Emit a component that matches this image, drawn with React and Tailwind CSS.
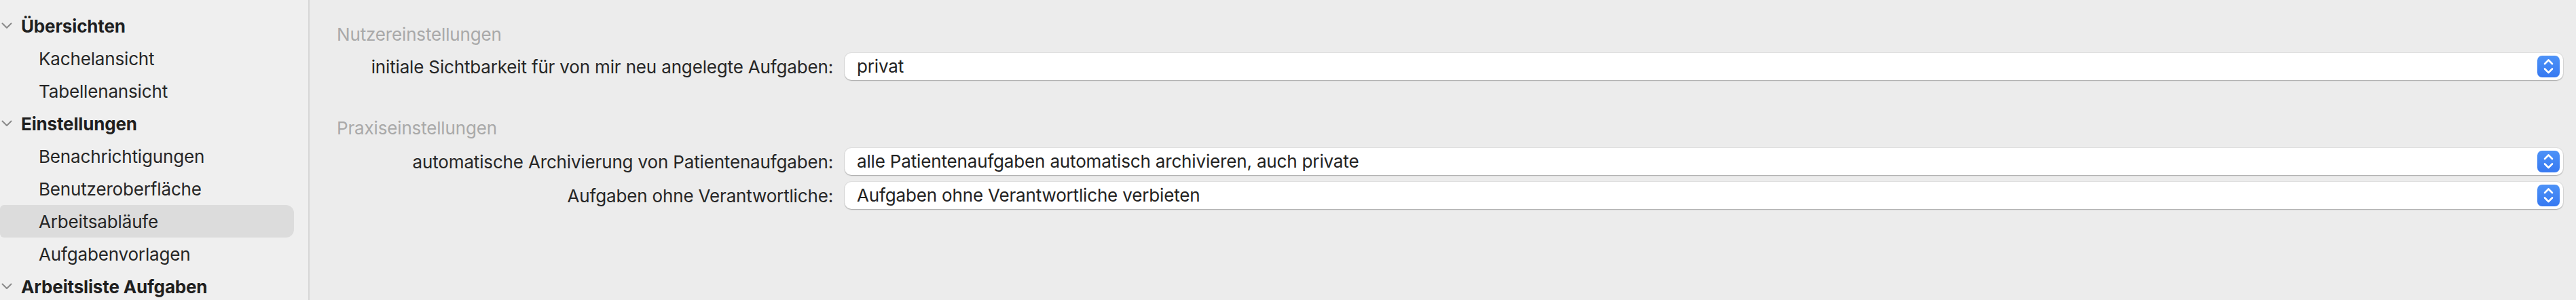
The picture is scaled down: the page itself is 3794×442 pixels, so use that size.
import React from "react";

const sidebar = [
  { type: "group", label: "Übersichten" },
  { type: "item", label: "Kachelansicht" },
  { type: "item", label: "Tabellenansicht" },
  { type: "group", label: "Einstellungen" },
  { type: "item", label: "Benachrichtigungen" },
  { type: "item", label: "Benutzeroberfläche" },
  { type: "item", label: "Arbeitsabläufe", selected: true },
  { type: "item", label: "Aufgabenvorlagen" },
  { type: "group", label: "Arbeitsliste Aufgaben" },
];

const sections = [
  {
    title: "Nutzereinstellungen",
    rows: [{ label: "initiale Sichtbarkeit für von mir neu angelegte Aufgaben:", value: "privat" }],
  },
  {
    title: "Praxiseinstellungen",
    rows: [
      {
        label: "automatische Archivierung von Patientenaufgaben:",
        value: "alle Patientenaufgaben automatisch archivieren, auch private",
      },
      { label: "Aufgaben ohne Verantwortliche:", value: "Aufgaben ohne Verantwortliche verbieten" },
    ],
  },
];

const Chevron = () => (
  <svg width="16" height="10" viewBox="0 0 16 10" className="absolute left-[2px] top-1/2 -translate-y-1/2">
    <path d="M1.5 1.5 L8 8 L14.5 1.5" fill="none" stroke="#8a8a8a" strokeWidth="2" strokeLinecap="round" strokeLinejoin="round" />
  </svg>
);

const Stepper = () => (
  <div className="w-[33px] h-[32px] rounded-[7px] bg-linear-to-b from-[#4d92f7] to-[#3779f1] flex items-center justify-center">
    <svg width="33" height="32" viewBox="0 0 33 32">
      <path d="M11 12 L16.5 6.5 L22 12" fill="none" stroke="white" strokeWidth="2.6" strokeLinecap="round" strokeLinejoin="round" />
      <path d="M11 19.5 L16.5 25 L22 19.5" fill="none" stroke="white" strokeWidth="2.6" strokeLinecap="round" strokeLinejoin="round" />
    </svg>
  </div>
);

const Select = ({ value }) => (
  <div className="flex-1 h-[40px] bg-white rounded-[10px] shadow-[0_0_0_1px_rgba(0,0,0,0.05),0_1px_1.5px_rgba(0,0,0,0.25)] flex items-center justify-between pl-[18px] pr-[5px]">
    <span className="text-[26px] text-[#222222] leading-none">{value}</span>
    <Stepper />
  </div>
);

export default function App() {
  return (
    <div className="flex h-[442px] w-full overflow-hidden bg-[#ececec] font-['Inter',sans-serif] tracking-[-0.01em]">
      {/* Sidebar */}
      <div className="w-[454px] shrink-0 bg-[#efefef] pt-[14px]">
        {sidebar.map((entry) =>
          entry.type === "group" ? (
            <div key={entry.label} className="relative h-[48px] flex items-center pl-[31px]">
              <Chevron />
              <span className="text-[26px] font-bold text-[#1f1f1f]">{entry.label}</span>
            </div>
          ) : (
            <div
              key={entry.label}
              className={`h-[48px] flex items-center pl-[57px] mr-[21px] rounded-r-[12px] rounded-l-[6px] ${
                entry.selected ? "bg-[#dcdcdc]" : ""
              }`}
            >
              <span className="text-[26px] text-[#262626]">{entry.label}</span>
            </div>
          )
        )}
      </div>
      <div className="w-[2px] shrink-0 bg-[#d6d6d6]" />

      {/* Main */}
      <div className="flex-1 pl-[40px] pr-[19px] pt-[34px]">
        {sections.map((section, si) => (
          <div key={section.title} className={si > 0 ? "mt-[54px]" : ""}>
            <div className="h-[32px] flex items-center text-[26px] text-[#a9a9a9]">{section.title}</div>
            <div className={`flex flex-col gap-[10px] ${si === 0 ? "mt-[12px]" : "mt-[14px]"}`}>
              {section.rows.map((row) => (
                <div key={row.label} className="flex items-center">
                  <div className="w-[748px] shrink-0 pr-[17px] text-right text-[26px] text-[#262626] whitespace-nowrap">
                    {row.label}
                  </div>
                  <Select value={row.value} />
                </div>
              ))}
            </div>
          </div>
        ))}
      </div>
    </div>
  );
}
